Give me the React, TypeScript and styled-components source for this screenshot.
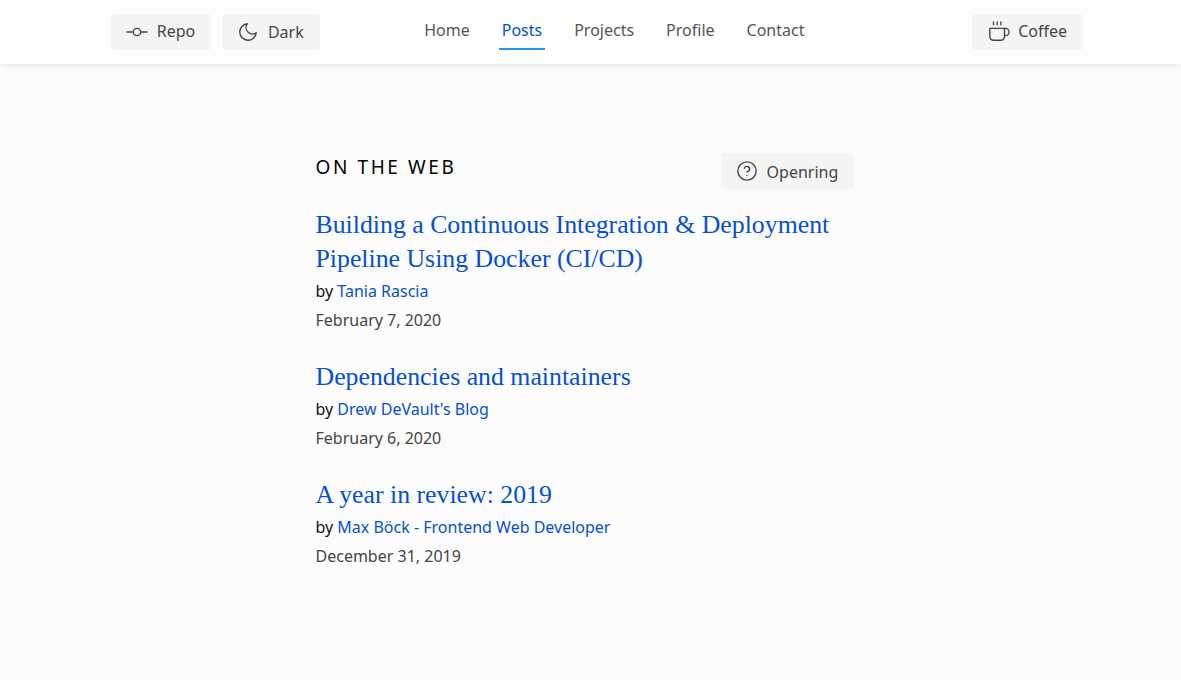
import React from "react";
import styled, { createGlobalStyle } from "styled-components";
import { FiCoffee, FiGitCommit, FiHelpCircle, FiMoon } from "react-icons/fi";

const posts = [
  {
    title: "Building a Continuous Integration & Deployment Pipeline Using Docker (CI/CD)",
    author: "Tania Rascia",
    date: "February 7, 2020",
  },
  {
    title: "Dependencies and maintainers",
    author: "Drew DeVault's Blog",
    date: "February 6, 2020",
  },
  {
    title: "A year in review: 2019",
    author: "Max Böck - Frontend Web Developer",
    date: "December 31, 2019",
  },
];

const navItems = ["Home", "Posts", "Projects", "Profile", "Contact"];

const GlobalStyle = createGlobalStyle`
  html, body {
    margin: 0;
    padding: 0;
    background: #fcfcfc;
    font-family: "Noto Sans", sans-serif;
    font-size: 16px;
    color: #111;
  }
`;

const Page = styled.div`
  min-height: 680px;
  background: #fcfcfc;
`;

const Header = styled.header`
  height: 64px;
  background: #fdfdfd;
  box-shadow: 0 1px 6px rgba(0, 0, 0, 0.1);
`;

const HeaderInner = styled.div`
  width: 972px;
  height: 100%;
  margin-left: 111px;
  display: flex;
  align-items: center;
`;

const ButtonGroup = styled.div<{ $end?: boolean }>`
  display: flex;
  gap: 11px;
  margin-left: ${(p) => (p.$end ? "auto" : "0")};
`;

const Button = styled.a`
  box-sizing: border-box;
  height: 36px;
  padding: 0 16px 0 15.2px;
  display: flex;
  align-items: center;
  gap: 8.5px;
  border-radius: 4px;
  background: #f4f4f4;
  color: #444;
  font-size: 16px;
  svg {
    flex: none;
    color: #444;
  }
`;

// the labels do not sit on quite the same line from one button to the next
const Label = styled.span<{ $up?: boolean; $down?: boolean }>`
  line-height: 24px;
  padding-bottom: ${(p) => (p.$up ? "2px" : "0")};
  padding-top: ${(p) => (p.$down ? "2px" : "0")};
`;

const Nav = styled.nav`
  display: flex;
  align-self: flex-start;
  gap: 26px;
  margin-left: 101.5px;
`;

const NavLink = styled.a<{ $active?: boolean }>`
  box-sizing: border-box;
  height: 50px;
  padding: 12px 3px 0;
  color: ${(p) => (p.$active ? "#0550d0" : "#555")};
  border-bottom: 2px solid ${(p) => (p.$active ? "#2196f3" : "transparent")};
  display: flex;
  align-items: center;
`;

const Main = styled.main`
  width: 538.8px;
  margin-left: 315.5px;
  padding-top: 89px;
`;

const TitleRow = styled.div`
  display: flex;
  justify-content: space-between;
  align-items: flex-start;
  margin-bottom: 19px;
`;

const SectionTitle = styled.h2`
  margin: 0;
  font-size: 19px;
  font-weight: 400;
  line-height: 28px;
  letter-spacing: 2.6px;
  color: #000;
`;

const Post = styled.article`
  margin-bottom: 25px;
`;

const PostTitle = styled.a`
  display: block;
  font-family: "Liberation Serif", serif;
  font-size: 25.8px;
  line-height: 34px;
  color: #0550d0;
`;

const Byline = styled.div`
  margin-top: 1px;
  line-height: 29px;
  color: #111;
  a {
    color: #0550d0;
  }
`;

const PostDate = styled.div`
  line-height: 29px;
  color: #444;
`;

export default function App() {
  return (
    <Page>
      <GlobalStyle />
      <Header>
        <HeaderInner>
          <ButtonGroup>
            <Button>
              <FiGitCommit size={22} strokeWidth={1.5} />
              <Label $up>Repo</Label>
            </Button>
            <Button>
              <FiMoon size={22} strokeWidth={1.5} />
              <Label>Dark</Label>
            </Button>
          </ButtonGroup>
          <Nav>
            {navItems.map((item) => (
              <NavLink key={item} $active={item === "Posts"}>
                {item}
              </NavLink>
            ))}
          </Nav>
          <ButtonGroup $end>
            <Button>
              <FiCoffee size={22} strokeWidth={1.5} />
              <Label $up>Coffee</Label>
            </Button>
          </ButtonGroup>
        </HeaderInner>
      </Header>
      <Main>
        <TitleRow>
          <SectionTitle>ON THE WEB</SectionTitle>
          <Button>
            <FiHelpCircle size={22} strokeWidth={1.5} />
            <Label $down>Openring</Label>
          </Button>
        </TitleRow>
        {posts.map((post) => (
          <Post key={post.title}>
            <PostTitle>{post.title}</PostTitle>
            <Byline>
              by <a>{post.author}</a>
            </Byline>
            <PostDate>{post.date}</PostDate>
          </Post>
        ))}
      </Main>
    </Page>
  );
}
